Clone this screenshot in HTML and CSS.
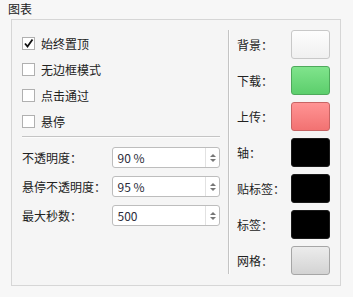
FILE: index.html
```html
<!DOCTYPE html>
<html lang="zh">
<head>
  <meta charset="UTF-8" />
  <title>图表</title>
  <link rel="stylesheet" href="styles.css">
</head>
<body>

<div class="title">图表</div>

<div class="group">
  <div class="left">
    <label class="check"><span class="box on"><svg width="11" height="11" viewBox="0 0 11 11"><path d="M2 5.5 L4.5 8.5 L9.5 1.5" fill="none" stroke="#111" stroke-width="1.8"/></svg></span>始终置顶</label>
    <label class="check"><span class="box"></span>无边框模式</label>
    <label class="check"><span class="box"></span>点击通过</label>
    <label class="check"><span class="box"></span>悬停</label>

    <div class="hline"></div>

    <div class="spin-row">
      <span class="spin-label">不透明度：</span>
      <div class="spin"><span class="val">90 %</span><span class="arrows"><i class="up"></i><i class="down"></i></span></div>
    </div>
    <div class="spin-row">
      <span class="spin-label">悬停不透明度：</span>
      <div class="spin"><span class="val">95 %</span><span class="arrows"><i class="up"></i><i class="down"></i></span></div>
    </div>
    <div class="spin-row">
      <span class="spin-label">最大秒数：</span>
      <div class="spin"><span class="val">500</span><span class="arrows"><i class="up"></i><i class="down"></i></span></div>
    </div>
  </div>

  <div class="vline"></div>

  <div class="right">
    <div class="color-row"><span>背景：</span><div class="swatch white"></div></div>
    <div class="color-row"><span>下载：</span><div class="swatch green"></div></div>
    <div class="color-row"><span>上传：</span><div class="swatch red"></div></div>
    <div class="color-row"><span>轴：</span><div class="swatch black"></div></div>
    <div class="color-row"><span>贴标签：</span><div class="swatch black"></div></div>
    <div class="color-row"><span>标签：</span><div class="swatch black"></div></div>
    <div class="color-row"><span>网格：</span><div class="swatch grey"></div></div>
  </div>
</div>

</body>
</html>
```

FILE: styles.css
```css
body {
  margin: 0;
  background: #f7f7f7;
  font-family: "Noto Sans CJK SC", "Noto Sans", sans-serif;
  font-size: 12px;
  color: #222;
}
.title {
  padding: 1px 0 0 8px;
  height: 18px;
  line-height: 16px;
  font-size: 12px;
}
.group {
  margin-left: 11px;
  width: 328px;
  height: 265px;
  border: 1px solid #d6d6d6;
  background: #f5f5f5;
  display: flex;
}
.left {
  width: 198px;
  padding: 10px 0 0 10px;
}
.check {
  display: flex;
  align-items: center;
  height: 26px;
}
.box {
  width: 11px;
  height: 11px;
  border: 1px solid #b0b0b0;
  background: #fff;
  margin-right: 6px;
  display: flex;
  align-items: center;
  justify-content: center;
}
.hline {
  margin-top: 2px;
  border-top: 1px solid #c4c4c4;
  border-bottom: 1px solid #fcfcfc;
}
.spin-row {
  display: flex;
  align-items: center;
  height: 29px;
}
.spin-row:first-of-type {
  margin-top: 0;
}
.hline + .spin-row {
  margin-top: 5px;
}
.spin-label {
  width: 90px;
}
.spin {
  width: 107px;
  height: 19px;
  border: 1px solid #bdbdbd;
  border-radius: 3px;
  background: #fff;
  display: flex;
}
.val {
  flex: 1;
  padding-left: 5px;
  line-height: 19px;
  color: #2c2c3a;
}
.arrows {
  width: 13px;
  border-left: 1px solid #e2e2e2;
  display: flex;
  flex-direction: column;
  align-items: center;
  justify-content: center;
  gap: 2px;
}
.up, .down {
  width: 0;
  height: 0;
  border-left: 3px solid transparent;
  border-right: 3px solid transparent;
}
.up {
  border-bottom: 3px solid #777;
}
.down {
  border-top: 3px solid #777;
}
.vline {
  margin: 10px 0 11px 8px;
  width: 1px;
  background: #c4c4c4;
  border-right: 1px solid #fcfcfc;
}
.right {
  padding: 10px 0 0 7px;
  flex: 1;
}
.color-row {
  display: flex;
  align-items: center;
  justify-content: space-between;
  height: 29px;
  margin-bottom: 7px;
  padding-right: 10px;
}
.swatch {
  width: 37px;
  height: 27px;
  border-radius: 3px;
  border: 1px solid #c8c8c8;
}
.white {
  background: linear-gradient(#fdfdfd, #f0f0f0);
}
.green {
  background: linear-gradient(#80e48c, #5cce6c);
  border-color: #4ea95b;
}
.red {
  background: linear-gradient(#ff9494, #f27272);
  border-color: #c86464;
}
.black {
  background: #000;
  border-color: #1a1a1a;
}
.grey {
  background: linear-gradient(#ececec, #d3d3d3);
  border-color: #a6a6a6;
}
```
